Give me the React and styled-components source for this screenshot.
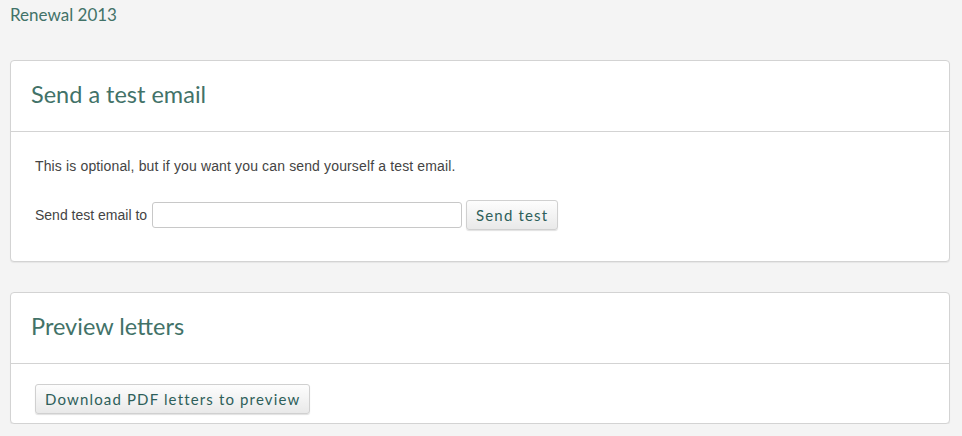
import React from "react";
import styled, { createGlobalStyle } from "styled-components";

const Global = createGlobalStyle`
  html, body { margin: 0; padding: 0; background: #f4f4f4; }
  body { font-family: "Liberation Sans", Arial, sans-serif; }
`;

const Page = styled.div`
  width: 940px;
  padding: 0 0 0 10px;
`;

const PageTitle = styled.div`
  font-family: Lato, "Open Sans", sans-serif;
  font-size: 17px;
  color: #427268;
  height: 60px;
  padding-top: 5px;
  box-sizing: border-box;
  line-height: 20px;
`;

const Panel = styled.section`
  background: #fff;
  border: 1px solid #d3d3d3;
  border-radius: 4px;
  box-shadow: 0 1px 1px rgba(0,0,0,0.06);
  margin-bottom: ${p => p.$gap || 0}px;
`;

const PanelHeader = styled.div`
  height: 70px;
  border-bottom: 1px solid #d3d3d3;
  display: flex;
  align-items: center;
  padding: 0 20px;
`;

const PanelTitle = styled.h2`
  margin: 0;
  font-family: Lato, "Open Sans", sans-serif;
  font-weight: 400;
  font-size: 23.5px;
  color: #427268;
  padding-bottom: 4px;
`;

const PanelBody = styled.div`
  padding: ${p => p.$pad};
`;

const Text = styled.p`
  margin: 0 0 24px;
  font-size: 14px;
  letter-spacing: 0.14px;
  color: #444;
  line-height: 20px;
`;

const Row = styled.div`
  display: flex;
  align-items: center;
  gap: 4px;
  font-size: 14px;
  color: #444;
`;

const Input = styled.input`
  width: 310px;
  height: 26px;
  box-sizing: border-box;
  border: 1px solid #c8c8c8;
  border-radius: 3px;
  margin-left: 1px;
`;

const Button = styled.button`
  height: 30px;
  box-sizing: border-box;
  padding: 0 ${p => p.$px || 9}px;
  border: 1px solid #d0d0d0;
  border-radius: 3px;
  background: linear-gradient(#fdfdfd, #e9e9e9);
  box-shadow: 0 1px 1px rgba(0,0,0,0.12);
  font-family: Lato, "Open Sans", sans-serif;
  font-size: 15px;
  letter-spacing: 1.15px;
  color: #2e5f5a;
  cursor: pointer;
`;

export default function App() {
  return (
    <>
      <Global />
      <Page>
        <PageTitle>Renewal 2013</PageTitle>
        <Panel $gap={30}>
          <PanelHeader>
            <PanelTitle>Send a test email</PanelTitle>
          </PanelHeader>
          <PanelBody $pad="24px 24px 31px">
            <Text>This is optional, but if you want you can send yourself a test email.</Text>
            <Row>
              <span>Send test email to</span>
              <Input type="text" />
              <Button $px={9}>Send test</Button>
            </Row>
          </PanelBody>
        </Panel>
        <Panel>
          <PanelHeader>
            <PanelTitle>Preview letters</PanelTitle>
          </PanelHeader>
          <PanelBody $pad="20px 24px 9px">
            <Button $px={9}>Download PDF letters to preview</Button>
          </PanelBody>
        </Panel>
      </Page>
    </>
  );
}
